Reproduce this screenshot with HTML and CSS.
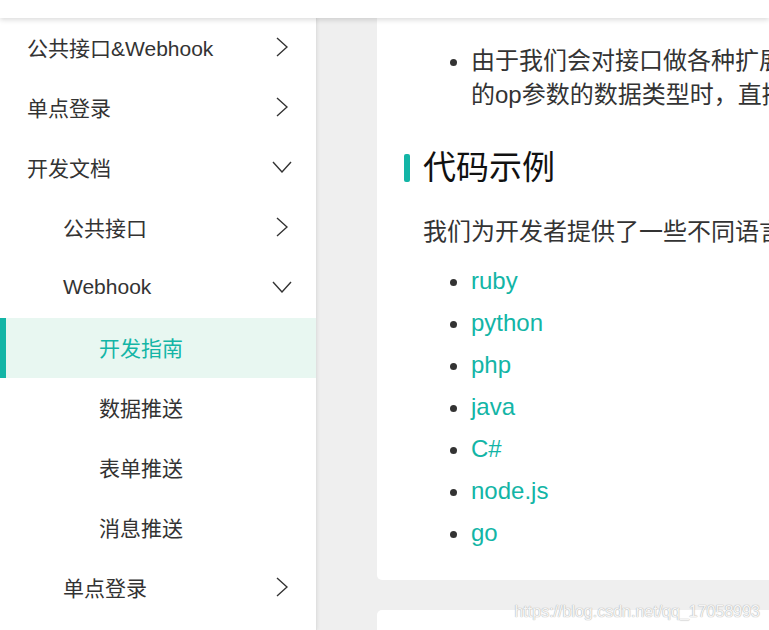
FILE: index.html
```html
<!DOCTYPE html>
<html lang="zh">
<head>
    <meta charset="UTF-8">
    <meta name="viewport" content="width=device-width, initial-scale=1.0">
    <title>开发指南 - Webhook</title>
    <link rel="stylesheet" href="styles.css">
</head>
<body>
    <div class="header"></div>
    <div class="layout">
        <div class="sidebar">
            <div class="menu-item level-1">
                <span>公共接口&amp;Webhook</span>
                <span class="arrow"><svg width="12" height="20" viewBox="0 0 12 20"><polyline points="1,1 11,10 1,19"/></svg></span>
            </div>
            <div class="menu-item level-1">
                <span>单点登录</span>
                <span class="arrow"><svg width="12" height="20" viewBox="0 0 12 20"><polyline points="1,1 11,10 1,19"/></svg></span>
            </div>
            <div class="menu-item level-1">
                <span>开发文档</span>
                <span class="arrow"><svg width="20" height="12" viewBox="0 0 20 12"><polyline points="1,1 10,11 19,1"/></svg></span>
            </div>
            <div class="menu-item level-2">
                <span>公共接口</span>
                <span class="arrow"><svg width="12" height="20" viewBox="0 0 12 20"><polyline points="1,1 11,10 1,19"/></svg></span>
            </div>
            <div class="menu-item level-2">
                <span>Webhook</span>
                <span class="arrow"><svg width="20" height="12" viewBox="0 0 20 12"><polyline points="1,1 10,11 19,1"/></svg></span>
            </div>
            <div class="menu-item level-3 active">
                <span>开发指南</span>
            </div>
            <div class="menu-item level-3">
                <span>数据推送</span>
            </div>
            <div class="menu-item level-3">
                <span>表单推送</span>
            </div>
            <div class="menu-item level-3">
                <span>消息推送</span>
            </div>
            <div class="menu-item level-2">
                <span>单点登录</span>
                <span class="arrow"><svg width="12" height="20" viewBox="0 0 12 20"><polyline points="1,1 11,10 1,19"/></svg></span>
            </div>
        </div>

        <div class="main">
            <div class="card">
                <ul class="notes">
                    <li>由于我们会对接口做各种扩展，请在判断返回结果<br>的op参数的数据类型时，直接使用字符串进行比较。</li>
                </ul>
                <h2 class="section-title">代码示例</h2>
                <p>我们为开发者提供了一些不同语言的示例代码，可以参考：</p>
                <ul class="links">
                    <li><a href="#">ruby</a></li>
                    <li><a href="#">python</a></li>
                    <li><a href="#">php</a></li>
                    <li><a href="#">java</a></li>
                    <li><a href="#">C#</a></li>
                    <li><a href="#">node.js</a></li>
                    <li><a href="#">go</a></li>
                </ul>
            </div>
            <div class="card next"></div>
        </div>
    </div>
    <div class="watermark">https://blog.csdn.net/qq_17058993</div>
</body>
</html>
```

FILE: styles.css
```css
body {
    margin: 0;
    height: 630px;
    overflow: hidden;
    font-family: "Liberation Sans", "Noto Sans CJK SC", sans-serif;
    color: #333;
    background-color: #efefef;
    position: relative;
}
.header {
    height: 18px;
    background-color: #fff;
    box-shadow: 0 2px 5px rgba(0, 0, 0, 0.14);
    position: relative;
    z-index: 2;
}
.layout {
    display: flex;
    height: 612px;
}
.sidebar {
    flex: none;
    width: 316px;
    background-color: #fff;
    border-right: 1px solid #e0e0e0;
    box-shadow: 1px 0 3px rgba(0, 0, 0, 0.06);
    position: relative;
    z-index: 1;
}
.menu-item {
    box-sizing: border-box;
    height: 60px;
    display: flex;
    align-items: center;
    justify-content: space-between;
    font-size: 21px;
    color: #333;
    padding-right: 24px;
    padding-bottom: 2px;
}
.level-1 {
    padding-left: 27px;
}
.level-2 {
    padding-left: 63px;
}
.level-3 {
    padding-left: 99px;
}
.menu-item.active {
    color: #13b5a6;
    background-color: #e8f7f1;
    box-shadow: inset 6px 0 0 #13b5a6;
}
.arrow {
    width: 20px;
    height: 20px;
    display: flex;
    align-items: center;
    justify-content: center;
}
.arrow svg {
    fill: none;
    stroke: #333;
    stroke-width: 1.4;
}
.main {
    flex: none;
    padding-left: 60px;
}
.card {
    width: 560px;
    padding: 26px 46px 26px;
    background-color: #fff;
    border-radius: 0 0 5px 5px;
}
.card.next {
    margin-top: 30px;
    height: 40px;
    padding: 0;
    border-radius: 5px 5px 0 0;
}
.notes {
    margin: 0;
    padding-left: 48px;
    font-size: 24px;
    line-height: 34px;
    white-space: nowrap;
}
.section-title {
    display: flex;
    align-items: center;
    gap: 13px;
    margin: 31px 0 0 -19px;
    font-size: 33px;
    font-weight: normal;
    line-height: 50px;
    color: #111;
}
.section-title::before {
    content: "";
    width: 6px;
    height: 28px;
    border-radius: 2px;
    background-color: #13b5a6;
}
.card p {
    margin: 22px 0 0;
    font-size: 24px;
    line-height: 34px;
    white-space: nowrap;
}
.links {
    margin: 11px 0 0;
    padding-left: 48px;
    font-size: 24px;
    line-height: 42px;
}
.links a {
    color: #13b5a6;
    text-decoration: none;
}
.watermark {
    position: absolute;
    right: 9px;
    bottom: 9px;
    font-size: 16px;
    color: rgba(255, 255, 255, 0.9);
    text-shadow: 0 0 1px #aaa, 0 0 1px #bbb;
}
```
